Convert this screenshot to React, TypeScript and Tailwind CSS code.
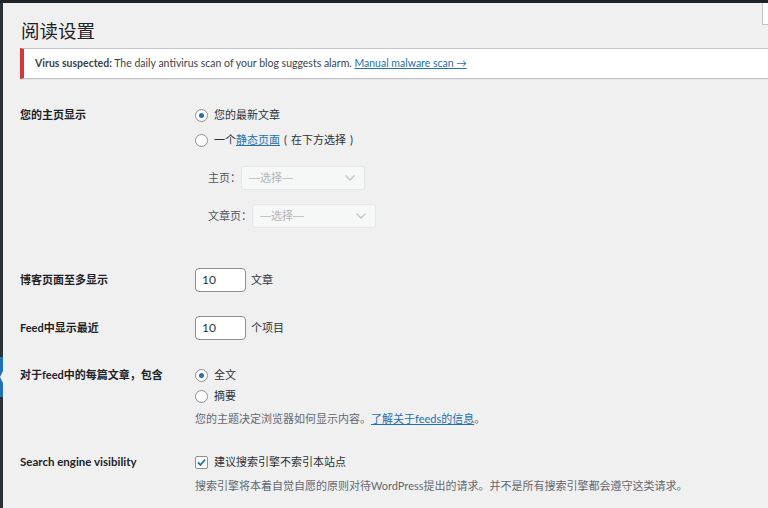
import React from "react";

const FONT = { fontFamily: 'Lato, "Noto Sans CJK SC", sans-serif' };

function Radio({ checked }: { checked?: boolean }) {
  return (
    <span className="w-[13px] h-[13px] rounded-full border border-[#8c8f94] bg-white flex items-center justify-center shrink-0">
      {checked && <span className="w-[5px] h-[5px] rounded-full bg-[#2271b1]" />}
    </span>
  );
}

function Checkbox() {
  return (
    <span className="w-[13px] h-[13px] rounded-[2px] border border-[#8c8f94] bg-white flex items-center justify-center shrink-0">
      <svg width="11" height="11" viewBox="0 0 11 11">
        <path d="M2 5.5 L4.5 8 L9 2.5" fill="none" stroke="#2271b1" strokeWidth="1.8" />
      </svg>
    </span>
  );
}

function Dash() {
  return <span className="inline-block w-[11px] h-[1px] bg-[#c3c4c7] align-middle" />;
}

function Select({ w }: { w: number }) {
  return (
    <div
      className="h-[24px] border border-[#e6e6e8] rounded-[3px] bg-[#f6f7f7] flex items-center justify-between pl-[7px] pr-[8px] text-[#b4b6b9]"
      style={{ width: w }}
    >
      <span className="flex items-center">
        <Dash />
        选择
        <Dash />
      </span>
      <svg width="12" height="8" viewBox="0 0 12 8">
        <path d="M1.5 1.5 L6 6 L10.5 1.5" fill="none" stroke="#c3c4c7" strokeWidth="1.3" />
      </svg>
    </div>
  );
}

function NumInput() {
  return (
    <div className="w-[51px] h-[24px] border border-[#8c8f94] rounded-[4px] bg-white flex items-center pl-[6px] text-[12px] text-[#2c3338]">
      10
    </div>
  );
}

function FW({ c }: { c: string }) {
  return <span className="inline-block w-[11px] text-center">{c}</span>;
}

export default function App() {
  return (
    <div
      className="w-[768px] h-[508px] overflow-hidden bg-[#f0f0f1] flex flex-col relative text-[11px] text-[#1d2327]"
      style={FONT}
    >
      <div className="h-[3px] bg-[#1d2327] shrink-0" />
      <div className="flex flex-1">
        <div className="w-[3px] bg-[#2c3338] flex flex-col shrink-0">
          <div className="h-[354px]" />
          <div className="h-[40px] bg-[#2271b1] relative">
            <div className="absolute right-0 top-[14px] w-0 h-0 border-y-[6px] border-y-transparent border-r-[3px] border-r-[#f0f0f1]" />
          </div>
        </div>
        <div className="flex-1 pl-[17px] flex flex-col">
          <h1 className="mt-[16px] h-[24px] text-[18.5px] leading-[24px] text-[#1d2327] pl-[1px]">阅读设置</h1>
          <div className="mt-[5px] h-[31px] w-[760px] bg-white border border-[#c3c4c7] border-l-[4px] border-l-[#d63638] shadow-[0_1px_1px_rgba(0,0,0,0.04)] flex items-center pl-[11px] text-[10.5px] text-[#3c434a] shrink-0">
            <span className="font-bold">Virus suspected:</span>
            <span>&nbsp;The daily antivirus scan of your blog suggests alarm.&nbsp;</span>
            <span className="text-[#2271b1] underline">Manual malware scan →</span>
          </div>

          {/* Row 1 */}
          <div className="flex mt-[26px]">
            <div className="w-[175px] h-[20px] flex items-center font-bold">您的主页显示</div>
            <div className="flex flex-col">
              <div className="h-[20px] flex items-center gap-[6px]">
                <Radio checked />
                <span className="text-[#2c3338]">您的最新文章</span>
              </div>
              <div className="h-[20px] mt-[5px] flex items-center gap-[6px]">
                <Radio />
                <span className="text-[#2c3338]">
                  一个<span className="text-[#2271b1] underline">静态页面</span>
                  <FW c="(" />在下方选择<FW c=")" />
                </span>
              </div>
              <div className="mt-[16px] flex items-center pl-[13px]">
                <span className="text-[#50575e]">主页：</span>
                <Select w={124} />
              </div>
              <div className="mt-[14px] flex items-center pl-[13px]">
                <span className="text-[#50575e]">文章页：</span>
                <Select w={124} />
              </div>
            </div>
          </div>

          {/* Row 2 */}
          <div className="flex mt-[40px] items-center">
            <div className="w-[175px] h-[24px] flex items-center font-bold">博客页面至多显示</div>
            <NumInput />
            <span className="ml-[5px] text-[#2c3338]">文章</span>
          </div>

          {/* Row 3 */}
          <div className="flex mt-[24px] items-center">
            <div className="w-[175px] h-[24px] flex items-center font-bold">Feed中显示最近</div>
            <NumInput />
            <span className="ml-[5px] text-[#2c3338]">个项目</span>
          </div>

          {/* Row 4 */}
          <div className="flex mt-[25px]">
            <div className="w-[175px] h-[20px] flex items-center font-bold">对于feed中的每篇文章，包含</div>
            <div className="flex flex-col">
              <div className="h-[20px] flex items-center gap-[6px]">
                <Radio checked />
                <span className="text-[#2c3338]">全文</span>
              </div>
              <div className="h-[20px] mt-[1px] flex items-center gap-[6px]">
                <Radio />
                <span className="text-[#2c3338]">摘要</span>
              </div>
              <div className="h-[20px] mt-[3px] flex items-center text-[#646970]">
                您的主题决定浏览器如何显示内容。
                <span className="text-[#2271b1] underline">了解关于feeds的信息</span>。
              </div>
            </div>
          </div>

          {/* Row 5 */}
          <div className="flex mt-[23px]">
            <div className="w-[175px] h-[20px] flex items-center font-bold text-[11.5px]">Search engine visibility</div>
            <div className="flex flex-col">
              <div className="h-[20px] flex items-center gap-[6px]">
                <Checkbox />
                <span className="text-[#2c3338]">建议搜索引擎不索引本站点</span>
              </div>
              <div className="h-[20px] mt-[4px] flex items-center text-[#646970]">
                搜索引擎将本着自觉自愿的原则对待WordPress提出的请求。并不是所有搜索引擎都会遵守这类请求。
              </div>
            </div>
          </div>
        </div>
      </div>
      <div className="absolute right-0 top-[3px] w-[6px] h-[22px] bg-white border-l border-b border-[#c3c4c7]" />
    </div>
  );
}
